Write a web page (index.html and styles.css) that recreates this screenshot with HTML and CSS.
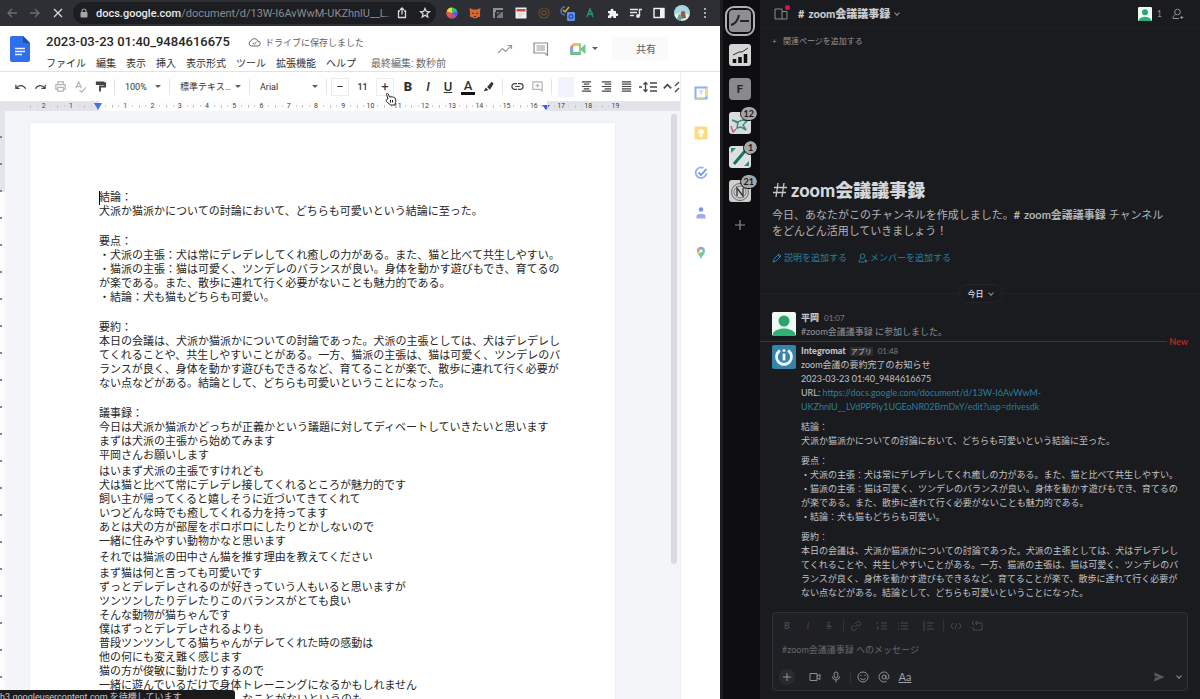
FILE: index.html
```html
<!DOCTYPE html>
<html lang="ja">
<head>
<meta charset="utf-8">
<title>2023-03-23 01:40_9484616675</title>
<link rel="stylesheet" href="styles.css">
</head>
<body>
<div class="desktop">
  <section class="browser">
    <header class="chrome">
      <button class="nav dim" aria-label="戻る"><svg viewBox="0 0 12 12"><path d="M11 6H2M6 2L2 6l4 4"/></svg></button>
      <button class="nav dim" aria-label="進む"><svg viewBox="0 0 12 12"><path d="M1 6h9M6 2l4 4-4 4"/></svg></button>
      <button class="nav" aria-label="中止"><svg viewBox="0 0 12 12"><path d="M2 2l8 8M10 2l-8 8"/></svg></button>
      <div class="address">
        <svg class="lock" viewBox="0 0 10 10"><rect x="1.500" y="4" width="7" height="5.500" rx="1" fill="#a5a6a9"/><path d="M3 4.500V3a2 2 0 0 1 4 0v1.500" fill="none" stroke="#a5a6a9" stroke-width="1.200"/></svg>
        <span class="url"><b>docs.google.com</b>/document/d/13W-I6AvWwM-UKZhnlU__L...</span>
        <button class="nav" aria-label="共有"><svg viewBox="0 0 12 12"><path d="M4 4H2.500v6.500h7V4H8M6 7.500V1M4 3l2-2 2 2"/></svg></button>
        <button class="nav" aria-label="ブックマーク"><svg viewBox="0 0 12 12"><path d="M6 1.500l1.300 3 3.200.2-2.500 2.100.8 3.200L6 8.300 3.200 10 4 6.800 1.500 4.700l3.200-.2z"/></svg></button>
      </div>
      <div class="extensions">
        <button aria-label="カラー"><svg viewBox="0 0 12 12"><circle cx="6" cy="6" r="5.500" fill="#3ac05c"/><path d="M6 6L6 .5A5.500 5.500 0 0 0 .7 4.500z" fill="#f6d13c"/><path d="M6 6L.7 4.500A5.500 5.500 0 0 0 4 11z" fill="#e9573f"/><path d="M6 6l-2 5a5.500 5.500 0 0 0 6-1.300z" fill="#e431a6"/><path d="M6 6l4 3.700A5.500 5.500 0 0 0 11.300 4.500z" fill="#4a5ff0"/></svg></button>
        <button aria-label="MetaMask"><svg viewBox="0 0 12 12"><path d="M.5 1L4 2.500h4L11.500 1l-.6 5 .3 3.500-2.700 1L7 11.300H5L3.500 10.500.8 9.500 1.100 6z" fill="#d9682c"/><path d="M3 6l2 .8M9 6l-2 .8M5 9.500h2" stroke="#532a18" stroke-width="1"/></svg></button>
        <button aria-label="メモ"><svg viewBox="0 0 12 12"><path d="M1 1h10v2H4v2H3v6H1z" fill="#8e9093"/><path d="M5 5h6v6H5z" fill="#77797c"/><path d="M3 10l7-6" stroke="#2e2f34" stroke-width="1.500"/></svg></button>
        <button aria-label="カレンダー"><svg viewBox="0 0 12 12"><rect x=".5" y=".5" width="11" height="11" fill="#f3eeee"/><path d="M1.500 2h9v2.500h-9z" fill="#cf4545"/><path d="M3 7h6M3 9h4" stroke="#d3c8c8"/></svg></button>
        <button aria-label="コイン"><svg viewBox="0 0 12 12"><circle cx="6" cy="6" r="5" fill="none" stroke="#6b4d28" stroke-width="1.200"/><circle cx="6" cy="6" r="2.200" fill="none" stroke="#80592b"/></svg></button>
        <button class="large" aria-label="チェック"><svg viewBox="0 0 16 16"><path d="M6 2a4 4 0 1 0 0 8" fill="none" stroke="#4e78c7" stroke-width="1.500"/><path d="M4 5l2 2 4-5" fill="none" stroke="#e3a83a" stroke-width="1.500"/><rect x="8" y="7" width="8" height="9" rx="1" fill="#5c8fe8"/><circle cx="12" cy="11.500" r="2" fill="none" stroke="#173b80"/></svg></button>
        <button aria-label="A"><svg viewBox="0 0 12 12"><path d="M3 10l3-8 3 8M4 7c2 1 3 0 5-1" fill="none" stroke="#2a9573" stroke-width="1.400"/></svg></button>
        <button aria-label="拡張機能"><svg viewBox="0 0 12 12"><path d="M1 4h2.500C2.800 1.500 6.500.5 6.500 3.500V4H9v2.500c3-.7 3 3 0 2.500V11H6.500c.2-2.500-2.500-2.500-2.300 0H1V8.500c2.300 0 2.300-2.500 0-2.200z" fill="#f2f2f3"/></svg></button>
        <button aria-label="再生リスト"><svg viewBox="0 0 12 12"><path d="M0 2.500h8M0 5.500h7M0 8.500h4M9.500 9V2.500H12" fill="none" stroke="#e4e4e6" stroke-width="1.400"/><circle cx="8" cy="9" r="2" fill="#e4e4e6"/></svg></button>
        <button aria-label="サイドパネル"><svg viewBox="0 0 12 12"><rect x="1" y="1.500" width="10" height="9" fill="none" stroke="#f2f2f3" stroke-width="1.400"/><path d="M7 1.500h4v9H7z" fill="#f2f2f3"/></svg></button>
        <button class="large" aria-label="プロフィール"><svg viewBox="0 0 16 16"><circle cx="8" cy="8" r="8" fill="#a7d7df"/><path d="M.5 10C4 7 12 8 15.500 10A8 8 0 0 1 .5 10z" fill="#e9efe9"/><path d="M6 14l1-7a2.500 2.500 0 0 1 4 0l1 6z" fill="#8b5f50"/><path d="M3 14l2-5 3 2-1 5z" fill="#67a58f"/></svg></button>
        <button aria-label="メニュー"><svg viewBox="0 0 12 12"><g fill="#d5d6d8"><circle cx="6" cy="2" r="1"/><circle cx="6" cy="6" r="1"/><circle cx="6" cy="10" r="1"/></g></svg></button>
      </div>
    </header>

    <div class="docs-head">
      <svg class="docs-logo" viewBox="0 0 20 26"><path d="M2 0h11l7 7v17a2 2 0 0 1-2 2H2a2 2 0 0 1-2-2V2a2 2 0 0 1 2-2z" fill="#2f6fea"/><path d="M13 0l7 7h-7z" fill="#1f4fb5"/><path d="M5 12.500h10M5 15.500h10M5 18.500h7" stroke="#e8f0ff" stroke-width="1.500"/></svg>
      <div class="docs-info">
        <div class="title-row">
          <h1>2023-03-23 01:40_9484616675</h1>
          <svg class="cloud" viewBox="0 0 13 10"><path d="M3.500 9a2.700 2.700 0 0 1-.3-5.300 3.500 3.500 0 0 1 6.600.5A2.400 2.400 0 0 1 10 9z" fill="none" stroke="#666"/><path d="M4.800 6l1.300 1.300L8.500 5" fill="none" stroke="#666"/></svg>
          <span class="saved">ドライブに保存しました</span>
        </div>
        <nav class="menus">
          <button>ファイル</button><button>編集</button><button>表示</button><button>挿入</button><button>表示形式</button><button>ツール</button><button>拡張機能</button><button>ヘルプ</button>
          <a href="#history">最終編集: 数秒前</a>
        </nav>
      </div>
      <div class="docs-actions">
        <button aria-label="アクティビティ"><svg width="16" height="12" viewBox="0 0 16 12"><path d="M1 10l4.500-4.500 3 3L14 3M10.500 2.500H14.500V6" fill="none" stroke="#999" stroke-width="1.200"/></svg></button>
        <button aria-label="コメント"><svg width="16" height="14" viewBox="0 0 16 14"><path d="M1 1h13.500v12.500L12 11H1z" fill="none" stroke="#8d8d8d" stroke-width="1.200"/><path d="M3.500 4h8.500M3.500 6h8.500M3.500 8h8.500" stroke="#999"/></svg></button>
        <button class="meet" aria-label="Meet"><svg width="18" height="14" viewBox="0 0 18 14"><path d="M4.500 1H12v3H4.500z" fill="#f0c14d"/><path d="M4.500 1v4H1z" fill="#e98172"/><path d="M1 5h3.500v5H1z" fill="#7ba6ee"/><path d="M1 10h11v3H2a1 1 0 0 1-1-1z" fill="#74bf86"/><path d="M12 1v12l-3-4V5z" fill="#8ace98"/><path d="M12 6l4.500-4v10L12 8.500z" fill="#7cc48e"/><path d="M4.500 4.500H10v5H4.500z" fill="#fff"/></svg><i class="caret"></i></button>
        <button class="share">共有</button>
      </div>
    </div>

    <div class="docs-body">
      <div class="editor">
        <div class="toolbar">
          <button aria-label="元に戻す"><svg viewBox="0 0 14 14"><path d="M2 5v4h4M2.500 8.500C5 5 10 5 12.500 9.500"/></svg></button>
          <button aria-label="やり直し"><svg viewBox="0 0 14 14"><path d="M12 5v4H8M11.500 8.500C9 5 4 5 1.500 9.500"/></svg></button>
          <button class="faint" aria-label="印刷"><svg viewBox="0 0 14 14"><path d="M4 5V2h6v3M4 10H2V5h10v5h-2M4 8h6v4H4z"/></svg></button>
          <button class="faint" aria-label="スペルチェック"><svg viewBox="0 0 14 14"><path d="M2 9l3-7 3 7M3 7h4M6 11l2 2 5-5"/></svg></button>
          <button aria-label="書式をコピー"><svg viewBox="0 0 14 14"><path d="M3 2.500h7v2H3zM10 3.500h2V7H6.500v5.500" stroke-width="2"/></svg></button>
          <span class="sep"></span>
          <label class="pick zoom"><select aria-label="倍率"><option>100%</option></select><i class="caret"></i></label>
          <span class="sep"></span>
          <label class="pick style"><select aria-label="スタイル"><option>標準テキス…</option></select><i class="caret"></i></label>
          <span class="sep"></span>
          <label class="pick font"><select aria-label="フォント"><option>Arial</option></select><i class="caret"></i></label>
          <span class="sep"></span>
          <button class="step" aria-label="小さく">−</button>
          <input class="size" aria-label="フォントサイズ" value="11">
          <button class="step plus" aria-label="大きく">+</button>
          <button class="glyph"><b>B</b></button>
          <button class="glyph"><em>I</em></button>
          <button class="glyph"><u>U</u></button>
          <button class="glyph"><span class="ink">A</span></button>
          <button aria-label="ハイライト"><svg viewBox="0 0 14 14"><path d="M2 12l2-4 3 3zM5.500 7.500l3 3 4-6.500-2-2z" fill="#333" stroke="none"/></svg></button>
          <span class="sep"></span>
          <button aria-label="リンク"><svg viewBox="0 0 14 14"><path d="M6.500 4H4a3 3 0 0 0 0 6h2.500M7.500 4H10a3 3 0 0 1 0 6H7.500M4.500 7h5"/></svg></button>
          <button class="faint" aria-label="コメントを追加"><svg viewBox="0 0 14 14"><path d="M2 2h10v10l-2-2H2zM7 4v4M5 6h4"/></svg></button>
          <span class="sep"></span>
          <button class="active" aria-label="左揃え"></button>
          <button aria-label="中央揃え"><svg viewBox="0 0 14 14"><path d="M2 2h10M4 4.500h6M2 7h10M4 9.500h6M2 12h10"/></svg></button>
          <button aria-label="右揃え"><svg viewBox="0 0 14 14"><path d="M2 2h10M5 4.500h7M2 7h10M5 9.500h7M2 12h10"/></svg></button>
          <button aria-label="両端揃え"><svg viewBox="0 0 14 14"><path d="M2 2h10M2 4.500h10M2 7h10M2 9.500h10M2 12h10"/></svg></button>
          <button class="spacing" aria-label="行間隔"><svg viewBox="0 0 20 14"><path d="M1 7h3M7.500 3v8M5.500 4.500l2-2 2 2M5.500 9.500l2 2 2-2M12 3h7M12 7h7M12 11h7"/></svg></button>
          <button class="fold" aria-label="非表示"><svg viewBox="0 0 14 14"><path d="M3 9l4-4 4 4" stroke-width="1.800"/></svg></button>
          <button class="more" aria-label="展開"><svg viewBox="0 0 6 14"><path d="M1 6l4-4M1 12l4-4"/></svg></button>
          <svg class="pointer" viewBox="0 0 12 14"><path d="M3 7L1.500 2.500c-.3-1.200 1.200-1.700 1.700-.6L4.500 5c2-.6 4 0 5.500 1 1 1 .8 3 .5 4.500L10 13H5.500L1.500 9.500C.5 8 2 7 3 7z" fill="#fff" stroke="#222"/><path d="M5.500 8v2.500M7.500 8v2.500" stroke="#222"/></svg>
        </div>
        <div class="ruler">
          <div class="marks">
            <span>2</span><span>1</span><span class="stop"></span><span>1</span><span>2</span><span>3</span><span>4</span><span>5</span><span>6</span><span>7</span><span>8</span><span>9</span><span>10</span><span>11</span><span>12</span><span>13</span><span>14</span><span>15</span><span class="edge">16</span><span>17</span><span>18</span><span>19</span>
          </div>
        </div>
        <div class="canvas">
          <div class="vruler"></div>
          <article class="page">
            <section>
              <p class="caret-line">結論：</p>
              <p>犬派か猫派かについての討論において、どちらも可愛いという結論に至った。</p>
            </section>
            <section>
              <p>要点：</p>
              <p>・犬派の主張：犬は常にデレデレしてくれ癒しの力がある。また、猫と比べて共生しやすい。</p>
              <p>・猫派の主張：猫は可愛く、ツンデレのバランスが良い。身体を動かす遊びもでき、育てるの<br>が楽である。また、散歩に連れて行く必要がないことも魅力的である。</p>
              <p>・結論：犬も猫もどちらも可愛い。</p>
            </section>
            <section>
              <p>要約：</p>
              <p>本日の会議は、犬派か猫派かについての討論であった。犬派の主張としては、犬はデレデレし<br>てくれることや、共生しやすいことがある。一方、猫派の主張は、猫は可愛く、ツンデレのバ<br>ランスが良く、身体を動かす遊びもできるなど、育てることが楽で、散歩に連れて行く必要が<br>ない点などがある。結論として、どちらも可愛いということになった。</p>
            </section>
            <section>
              <p>議事録：</p>
              <div class="turn">
                <p>今日は犬派か猫派かどっちが正義かという議題に対してディベートしていきたいと思います</p>
                <p>まずは犬派の主張から始めてみます</p>
                <p>平岡さんお願いします</p>
              </div>
              <div class="turn">
                <p>はいまず犬派の主張ですけれども</p>
                <p>犬は猫と比べて常にデレデレ接してくれるところが魅力的です</p>
                <p>飼い主が帰ってくると嬉しそうに近づいてきてくれて</p>
                <p>いつどんな時でも癒してくれる力を持ってます</p>
                <p>あとは犬の方が部屋をボロボロにしたりとかしないので</p>
                <p>一緒に住みやすい動物かなと思います</p>
              </div>
              <div class="turn">
                <p>それでは猫派の田中さん猫を推す理由を教えてください</p>
              </div>
              <div class="turn">
                <p>まず猫は何と言っても可愛いです</p>
                <p>ずっとデレデレされるのが好きっていう人もいると思いますが</p>
                <p>ツンツンしたりデレたりこのバランスがとても良い</p>
                <p>そんな動物が猫ちゃんです</p>
                <p>僕はずっとデレデレされるよりも</p>
                <p>普段ツンツンしてる猫ちゃんがデレてくれた時の感動は</p>
                <p>他の何にも変え難く感じます</p>
                <p>猫の方が俊敏に動けたりするので</p>
                <p>一緒に遊んでいるだけで身体トレーニングになるかもしれません</p>
                <p class="hanging">なことがないというのも</p>
              </div>
            </section>
          </article>
          <div class="scrollbar"></div>
        </div>
      </div>
      <aside class="side">
        <button aria-label="カレンダー"><svg viewBox="0 0 14 14"><path d="M1.500 1.500h11v11h-11z" fill="#fff" stroke="#90aef0" stroke-width="2"/><path d="M1 13h9M13 1v9" stroke="#b9d98d" stroke-width="2"/><path d="M13 2v8" stroke="#f1da83" stroke-width="2"/><path d="M5 5h4M7 5v4" stroke="#b4c8f2"/></svg></button>
        <button aria-label="Keep"><svg viewBox="0 0 14 14"><rect x=".5" y=".5" width="13" height="13" rx="1" fill="#fbdc80"/><circle cx="7" cy="6" r="2.700" fill="#fff"/><path d="M5.500 9h3v2h-3z" fill="#fff"/></svg></button>
        <button aria-label="ToDo"><svg viewBox="0 0 14 14"><path d="M9.500 2A5.300 5.300 0 1 0 12.300 7" fill="none" stroke="#8fb0f5" stroke-width="1.800"/><path d="M4.500 6.500L7 9l5.500-6" fill="none" stroke="#7191ec" stroke-width="1.800"/></svg></button>
        <button aria-label="連絡先"><svg viewBox="0 0 14 14"><circle cx="7" cy="3.500" r="2.300" fill="#8394e4"/><path d="M2.500 12.500V10c0-3 9-3 9 0v2.500z" fill="#9dabf2"/></svg></button>
        <button aria-label="マップ"><svg viewBox="0 0 14 14"><path d="M7 13.500C6.500 10 3 8.500 3 5a4 4 0 0 1 8 0c0 3.500-3.500 5-4 8.500z" fill="#7cc896"/><path d="M3.200 6A4 4 0 0 1 5 1.500L7 5z" fill="#e99090"/><path d="M5 1.500a4 4 0 0 1 5.300 1.200L7 5z" fill="#87a9f0"/><path d="M3.200 6L7 5l-3 4z" fill="#f3d67b"/><circle cx="7" cy="5" r="1.400" fill="#fff"/></svg></button>
      </aside>
    </div>
    <div class="status">h3.googleusercontent.com を待機しています...</div>
  </section>

  <section class="slack">
    <nav class="rail">
      <button class="ws current" aria-label="ノー"><svg viewBox="0 0 22 22"><rect width="22" height="22" rx="4" fill="#8f8f91"/><path d="M10 5C9 10 6 14 2 15M11 11h9" fill="none" stroke="#252528" stroke-width="2"/></svg></button>
      <button class="ws" aria-label="グラフ"><svg viewBox="0 0 22 22"><rect width="22" height="22" rx="3" fill="#d5d5d6"/><path d="M5.500 19v-4M11 19v-6M16.500 19v-9" stroke="#0d0d0f" stroke-width="3.500"/><path d="M4 11l6-3h3l6-4" fill="none" stroke="#333"/></svg></button>
      <button class="ws letter">F</button>
      <button class="ws" aria-label="ワークスペース 12"><svg viewBox="0 0 22 22"><rect width="22" height="22" rx="3" fill="#d9dcdc"/><path d="M3 8l6 2 4-2 5 1-4 4 3 5-5-3-4 1 1-5z" fill="none" stroke="#3b8f7d" stroke-width="1.500"/><path d="M2 14l2 6 3-3" fill="none" stroke="#c16780" stroke-width="1.500"/></svg><span class="badge">12</span></button>
      <button class="ws" aria-label="ワークスペース 1"><svg viewBox="0 0 22 22"><rect width="22" height="22" rx="3" fill="#dce0df"/><path d="M5 18L16 5" stroke="#17745e" stroke-width="3"/><path d="M2 7V2h5M15 20h5v-5" fill="#2b8c72"/></svg><span class="badge">1</span></button>
      <button class="ws" aria-label="ワークスペース 21"><svg viewBox="0 0 22 22"><rect width="22" height="22" rx="3" fill="#cfcfcf"/><circle cx="11" cy="12" r="8.500" fill="none" stroke="#666"/><circle cx="11" cy="12" r="6" fill="none" stroke="#777"/><path d="M8 16V8l6 8V8" fill="none" stroke="#333" stroke-width="1.300"/></svg><span class="badge">21</span></button>
      <button class="ws add" aria-label="追加"><svg viewBox="0 0 22 22"><path d="M11 6v10M6 11h10" stroke="#8b8c8f" stroke-width="1.200"/></svg></button>
    </nav>

    <main class="channel">
      <header class="channel-head">
        <button class="panel" aria-label="サイドバー"><svg viewBox="0 0 14 12"><path d="M1 1h7v10H1zM8 3.500h5V11H8" fill="none" stroke="#8b8c8f"/></svg><span class="dot"></span></button>
        <h2><button><span class="hash">#</span>zoom会議議事録<i class="chev"></i></button></h2>
        <button class="members"><svg class="face" viewBox="0 0 24 24"><rect width="24" height="24" rx="2" fill="#eefaf4"/><circle cx="12" cy="9" r="5" fill="#2ba36c"/><path d="M2 24v-3c3-6 17-6 20 0v3z" fill="#2fb075"/></svg>1</button>
        <button class="invite" aria-label="招待"><svg viewBox="0 0 12 12"><circle cx="5.500" cy="4" r="2.800"/><path d="M3.500 6.500C1.500 7.500 1 9 1 10.500h6M8 9.500h3.500M9.700 8v3"/></svg></button>
      </header>
      <button class="bookmark"><span>+</span>関連ページを追加する</button>
      <div class="feed">
        <div class="intro">
          <h3><svg viewBox="0 0 16 16"><path d="M6 1L4 15M12 1l-2 14M2 5.500h13M1 10.500h13"/></svg>zoom会議議事録</h3>
          <p>今日、あなたがこのチャンネルを作成しました。<b><span class="hash">#</span>zoom会議議事録</b> チャンネル<br>をどんどん活用していきましょう！</p>
          <div class="links">
            <a href="#describe"><svg viewBox="0 0 10 10"><path d="M1 9l1-3 5-5 2 2-5 5zM6 2l2 2"/></svg>説明を追加する</a>
            <a href="#invite"><svg viewBox="0 0 10 10"><circle cx="4.500" cy="3.200" r="2.300"/><path d="M3 5.500C1 6.500 1 8 1 9h5M6 8h3.500M7.800 6.200v3.500"/></svg>メンバーを追加する</a>
          </div>
        </div>
        <div class="day"><button>今日<i class="chev"></i></button></div>
        <article class="message">
          <svg class="avatar" viewBox="0 0 24 24"><rect width="24" height="24" rx="2" fill="#f0faf5"/><circle cx="12" cy="9" r="5.500" fill="#2ba36c"/><path d="M1 24v-3c4-6 18-6 22 0v3z" fill="#2fb075"/></svg>
          <div class="content">
            <div class="who"><b>平岡</b><time>01:07</time></div>
            <p class="soft">#zoom会議議事録 に参加しました。</p>
          </div>
        </article>
        <div class="unread"><span>New</span></div>
        <article class="message">
          <svg class="avatar" viewBox="0 0 24 24"><rect width="24" height="24" rx="2" fill="#3582ab"/><path d="M8 5.500a7.500 7.500 0 1 0 8 0" fill="none" stroke="#f2f7fa" stroke-width="2.800"/><path d="M12 8.500v7" stroke="#f2f7fa" stroke-width="2.800"/><circle cx="12" cy="5.500" r="1.500" fill="#f2f7fa"/></svg>
          <div class="content">
            <div class="who"><b>Integromat</b><span class="app">アプリ</span><time>01:48</time></div>
            <p>zoom会議の要約完了のお知らせ<br>2023-03-23 01:40_9484616675<br>URL: <a href="#doc">https://docs.google.com/document/d/13W-I6AvWwM-<br>UKZhnlU__LVdPPPiy1UGEoNR02BrnDxY/edit?usp=drivesdk</a></p>
            <p>結論：<br>犬派か猫派かについての討論において、どちらも可愛いという結論に至った。</p>
            <p>要点：<br>・犬派の主張：犬は常にデレデレしてくれ癒しの力がある。また、猫と比べて共生しやすい。<br>・猫派の主張：猫は可愛く、ツンデレのバランスが良い。身体を動かす遊びもでき、育てるの<br>が楽である。また、散歩に連れて行く必要がないことも魅力的である。<br>・結論：犬も猫もどちらも可愛い。</p>
            <p>要約：<br>本日の会議は、犬派か猫派かについての討論であった。犬派の主張としては、犬はデレデレし<br>てくれることや、共生しやすいことがある。一方、猫派の主張は、猫は可愛く、ツンデレのバ<br>ランスが良く、身体を動かす遊びもできるなど、育てることが楽で、散歩に連れて行く必要が<br>ない点などがある。結論として、どちらも可愛いということになった。</p>
          </div>
        </article>
      </div>
      <form class="composer">
        <div class="format">
          <button type="button"><b>B</b></button><button type="button"><em>I</em></button><button type="button"><s>S</s></button>
          <span class="bar"></span>
          <button type="button" aria-label="リンク"><svg viewBox="0 0 12 12"><path d="M5 7l3-3M4 5L2 7a2 2 0 0 0 3 3l2-2M5 4l2-2a2 2 0 0 1 3 3L8 7"/></svg></button>
          <button type="button" class="wide" aria-label="番号付き"><svg viewBox="0 0 12 12"><path d="M1 2v2M1 7h1v2H1M5 3h6M5 6h6M5 9h6"/></svg></button>
          <button type="button" aria-label="箇条書き"><svg viewBox="0 0 12 12"><path d="M1 3h1M1 6h1M1 9h1M4 3h7M4 6h7M4 9h7"/></svg></button>
          <button type="button" class="wide" aria-label="引用"><svg viewBox="0 0 12 12"><path d="M1 1v10M4 3h7M4 6h5M4 9h7"/></svg></button>
          <span class="bar"></span>
          <button type="button" aria-label="コード"><svg viewBox="0 0 12 12"><path d="M3 3L1 6l2 3M9 3l2 3-2 3M7 3L5 9"/></svg></button>
          <button type="button" aria-label="コードブロック"><svg viewBox="0 0 12 12"><path d="M4 3h7v7H2V7M3 1L1 3l2 2M5 1l2 2-2 2"/></svg></button>
        </div>
        <textarea rows="1" aria-label="メッセージ" placeholder="#zoom会議議事録 へのメッセージ"></textarea>
        <div class="tools">
          <button type="button" class="round" aria-label="添付"><svg viewBox="0 0 12 12"><path d="M6 2v8M2 6h8"/></svg></button>
          <button type="button" class="after" aria-label="ビデオ"><svg viewBox="0 0 12 12"><path d="M1 2.500h7v7H1zM8 5l3-1.500v5L8 7"/></svg></button>
          <button type="button" aria-label="音声"><svg viewBox="0 0 12 12"><rect x="4.200" y="1" width="3.600" height="6" rx="1.800"/><path d="M2.500 5.500c0 4.500 7 4.500 7 0M6 9v2.500"/></svg></button>
          <span class="bar"></span>
          <button type="button" aria-label="絵文字"><svg viewBox="0 0 12 12"><circle cx="6" cy="6" r="5"/><path d="M4 4v1M8 4v1M3.500 7c1 2.300 4 2.300 5 0"/></svg></button>
          <button type="button" aria-label="メンション"><svg viewBox="0 0 12 12"><circle cx="6" cy="6" r="2"/><path d="M8 4v3c0 1.800 3 1.500 3-1a5 5 0 1 0-2.500 4.300"/></svg></button>
          <button type="button" class="aa"><u>Aa</u></button>
          <button type="submit" class="send" aria-label="送信"><svg viewBox="0 0 12 12"><path d="M1 1.500L11.500 6 1 10.500 2 6.800 7 6 2 5.200z" fill="#5b5d61" stroke="none"/></svg></button>
          <i class="chev"></i>
        </div>
      </form>
    </main>
  </section>
</div>
</body>
</html>
```
FILE: styles.css
```css
* { box-sizing: border-box; }
body, h1, h2, h3, p { margin: 0; }
body { font-family: Roboto, "Noto Sans CJK JP", sans-serif; background: #17171a; }
button, input, select, textarea { font: inherit; color: inherit; background: none; border: 0; padding: 0; margin: 0; }
button { display: flex; align-items: center; justify-content: center; white-space: nowrap; }
svg { display: block; flex: none; }
.desktop { display: grid; grid-template-columns: 3fr 2fr; height: 100vh; overflow: hidden; }

/* Browser window */
.browser { display: flex; flex-direction: column; min-width: 0; min-height: 0; position: relative; background: #fff; }
.chrome { display: flex; align-items: center; flex: none; height: 26px; background: #2e2f34; }
.nav { width: 23px; height: 22px; }
.nav svg { width: 12px; height: 12px; fill: none; stroke: #d8d9dc; stroke-width: 1.3; }
.nav.dim svg { stroke: #6e6f74; }
.address { display: flex; align-items: center; flex: 1; min-width: 0; height: 22px; margin-left: 4px; padding-left: 6px; border-radius: 11px; background: #1d1e21; }
.lock { width: 10px; height: 10px; margin-right: 7px; }
.url { flex: 1; min-width: 0; overflow: hidden; white-space: nowrap; font-size: 11px; color: #8b8c90; }
.url b { font-weight: 500; color: #e9e9eb; }
.extensions { display: flex; align-items: center; margin: 0 4px; }
.extensions button { width: 23px; height: 22px; }
.extensions svg { width: 12px; height: 12px; }
.extensions .large svg { width: 16px; height: 16px; }

.docs-head { display: flex; flex: none; height: 46px; padding-left: 10px; border-bottom: 1px solid #e2e2e4; }
.docs-logo { width: 20px; height: 26px; margin-top: 10px; }
.docs-info { flex: 1; min-width: 0; margin-left: 16px; padding-top: 7px; }
.title-row { display: flex; align-items: center; height: 18px; }
h1 { font-size: 13px; font-weight: 500; line-height: 18px; color: #262626; white-space: nowrap; }
.cloud { width: 13px; height: 10px; margin: 0 4px 0 18px; }
.saved { font-size: 9px; color: #5f6063; white-space: nowrap; }
.menus { display: flex; align-items: center; gap: 10px; height: 22px; font-size: 10px; color: #2f2f31; }
.menus a { margin-left: 5px; color: #6a6a6d; text-decoration: none; white-space: nowrap; }
.docs-actions { display: flex; align-items: center; gap: 20px; padding-right: 52px; }
.docs-actions .share { width: 56px; height: 24px; margin-left: -6px; padding-left: 12px; border-radius: 3px; background: #fafafa; font-size: 10px; color: #5c5c5e; }
.meet { gap: 5px; }
.caret { border: 3px solid transparent; border-top-color: #5f6063; border-bottom: 0; }

.docs-body { display: flex; flex: 1; min-height: 0; }
.editor { display: flex; flex-direction: column; flex: 1; min-width: 0; }
.toolbar { position: relative; display: flex; align-items: center; flex: none; height: 29px; padding-left: 10px; font-size: 9px; color: #333; }
.toolbar button { flex: none; width: 20px; height: 20px; }
.toolbar button svg { width: 13px; height: 13px; fill: none; stroke: #454547; stroke-width: 1.3; }
.toolbar .faint svg { stroke: #b4b4b6; }
.sep { flex: none; width: 1px; height: 16px; margin: 0 4px; background: #e5e5e7; }
.pick { display: flex; align-items: center; flex: none; padding: 0 4px 0 6px; }
.pick select { flex: 1; min-width: 0; appearance: none; outline: 0; }
.zoom { width: 46px; }
.style { width: 71px; }
.font { width: 68px; }
.toolbar .step { width: 18px; height: 18px; border: 1px solid #ececee; font-size: 13px; }
.size { width: 27px; height: 18px; text-align: center; font-weight: 500; }
.toolbar .plus { margin-right: 4px; }
.toolbar .glyph { font-size: 13px; font-weight: 500; }
.toolbar .glyph b { font-weight: 900; }
.ink { padding: 0 3px; line-height: 13px; border-bottom: 3px solid #111; }
.toolbar .active { width: 16px; margin: 0 2px; background: #f2f2fd; }
.toolbar .spacing { width: 24px; }
.toolbar .spacing svg { width: 20px; height: 14px; }
.toolbar .fold { width: 14px; }
.toolbar .more { width: 6px; }
.toolbar .more svg { width: 6px; height: 14px; }
.pointer { position: absolute; left: 385px; bottom: -5px; width: 12px; height: 14px; z-index: 2; }

.ruler { flex: none; height: 10px; padding: 0 51px 0 30px; background: linear-gradient(90deg, #e3e4e9 14.5%, #fdfdfe 14.5% 80.5%, #e3e4e9 80.5%); }
.marks { display: flex; }
.marks span { position: relative; flex: 1; height: 10px; font-size: 7px; line-height: 10px; text-align: center; color: #3e3f42; background: linear-gradient(#c3c4c9, #c3c4c9) 0 50% / 1px 3px no-repeat, linear-gradient(#cfd0d4, #cfd0d4) 25% 50% / 1px 2px no-repeat, linear-gradient(#cfd0d4, #cfd0d4) 78% 50% / 1px 2px no-repeat; }
.stop::after, .edge::after { content: ""; position: absolute; top: 2px; left: 50%; margin-left: -4px; border: 4px solid transparent; border-top: 7px solid #3f74ee; border-bottom: 0; }
.edge::after { top: 4px; left: 95%; border-top: 5px solid #4a55e0; }

.canvas { display: flex; flex: 1; min-height: 0; overflow: hidden; background: #f4f5f9; }
.vruler { flex: none; width: 5px; background: repeating-linear-gradient(transparent 0 25px, #85868a 25px 27px) 0 0 / 2px 100% no-repeat, linear-gradient(#e3e4e9 81px, #fcfcfd 81px); }
.page { flex: 1; min-width: 0; height: max-content; margin: 12px 56px 0 25px; padding: 68px 40px 0 69px; background: #fff; box-shadow: 0 0 2px #e2e3e8; font-size: 11px; line-height: 14px; color: #262626; white-space: nowrap; }
.page section + section { margin-top: 16px; }
.turn + .turn { margin-top: 2px; }
.caret-line::before { content: ""; position: absolute; width: 1px; height: 14px; background: #000; }
.hanging { padding-left: 13em; }
.scrollbar { flex: none; width: 6px; height: 450px; margin: 3px 3px 0 0; border-radius: 3px; background: #d9dade; }
.side { display: flex; flex-direction: column; align-items: center; gap: 20px; flex: none; width: 40px; padding-top: 11px; border-left: 1px solid #ededf0; }
.side button { width: 20px; height: 20px; }
.side svg { width: 14px; height: 14px; }
.status { position: absolute; left: 0; bottom: 0; width: 235px; height: 9px; overflow: hidden; border-radius: 0 3px 0 0; background: #1b1b1e; font-size: 9px; line-height: 14px; color: #c8c8ca; white-space: nowrap; }

/* Slack window */
.slack { display: flex; min-width: 0; min-height: 0; border-left: 3px solid #1c1c1e; background: #1a1b1f; font-family: Lato, "Noto Sans CJK JP", sans-serif; font-size: 9px; line-height: 14px; color: #c2c3c5; }
.rail { display: flex; flex-direction: column; align-items: center; gap: 12px; flex: none; width: 37px; padding-top: 10px; padding-right: 3px; background: #0e0e10; }
.ws { position: relative; width: 22px; height: 22px; border-radius: 4px; }
.ws svg { width: 22px; height: 22px; }
.current { outline: 2px solid #b0b0b2; outline-offset: 2px; border-radius: 5px; }
.letter { background: #8a8a8c; color: #252528; font-size: 12px; font-weight: 700; }
.badge { position: absolute; top: -5px; right: -6px; min-width: 13px; height: 13px; padding: 0 3px; border-radius: 7px; background: #a6a6a9; outline: 1px solid #0e0e10; color: #1b1b1e; font-size: 9px; font-weight: 700; line-height: 13px; }
.channel { display: flex; flex-direction: column; flex: 1; min-width: 0; }
.channel-head { display: flex; align-items: center; flex: none; height: 29px; padding: 0 14px; border-bottom: 1px solid #202125; }
.panel { position: relative; }
.panel svg { width: 14px; height: 12px; }
.dot { position: absolute; top: -3px; right: -2px; width: 5px; height: 5px; border-radius: 50%; background: #d8134f; }
h2 { flex: 1; margin-left: 10px; font-size: 11px; font-weight: 900; color: #cacbcd; }
.hash { margin-right: 4px; }
.chev { width: 4px; height: 4px; margin: 0 0 2px 5px; border: solid #939497; border-width: 0 1px 1px 0; rotate: 45deg; }
.members { gap: 5px; color: #8f9093; }
.face { width: 14px; height: 14px; }
.invite { margin: 0 2px 0 10px; }
.invite svg { width: 12px; height: 12px; fill: none; stroke: #909194; }
.bookmark { align-self: flex-start; height: 24px; margin-left: 12px; font-size: 8px; color: #939497; }
.bookmark span { width: 11px; text-align: left; }
.feed { display: flex; flex-direction: column; justify-content: flex-end; flex: 1; min-height: 0; padding-bottom: 12px; }
.intro { padding: 0 12px; }
h3 { display: flex; align-items: center; gap: 3px; font-size: 18px; line-height: 26px; font-weight: 900; color: #d6d7d9; }
h3 svg { width: 16px; height: 16px; fill: none; stroke: #c6c7c9; stroke-width: 1.3; }
.intro p { margin-top: 4px; font-size: 11px; line-height: 16px; color: #b3b4b7; white-space: nowrap; }
.links { display: flex; gap: 11px; margin-top: 12px; }
.links a { display: flex; align-items: center; gap: 2px; }
.links svg { width: 10px; height: 10px; fill: none; stroke: #2a7f9e; }
a { color: #2a7f9e; text-decoration: none; }
.day { display: flex; align-items: center; margin-top: 19px; }
.day::before, .day::after { content: ""; flex: 1; height: 1px; background: #222327; }
.day button { height: 19px; padding: 0 9px; border: 1px solid #24252a; border-radius: 10px; font-weight: 700; font-size: 8px; }
.message { display: flex; gap: 5px; padding: 0 12px; }
.day + .message { margin-top: 8px; }
.avatar { width: 24px; height: 24px; margin-top: 1px; }
.content { min-width: 0; white-space: nowrap; }
.content p + p { margin-top: 6px; }
.who { display: flex; align-items: center; height: 14px; }
.who b { font-weight: 900; }
.who time { margin-left: 5px; color: #7c7d81; font-size: 8px; }
.app { margin-left: 4px; padding: 0 1px; background: #2b2c30; font-size: 7px; line-height: 9px; }
.soft { color: #939497; }
.unread { display: flex; align-items: center; height: 5px; padding-right: 12px; color: #a52d2b; font-weight: 700; }
.unread::before { content: ""; flex: 1; height: 1px; margin-right: 2px; background: #73201f; }
.composer { flex: none; margin: 0 12px 8px; padding: 4px 6px; border: 1px solid #303236; border-radius: 4px; background: #1f2023; }
.format, .tools { display: flex; align-items: center; height: 18px; color: #46484c; }
.composer button { width: 16px; height: 16px; margin-right: 5px; }
.composer svg { width: 12px; height: 12px; fill: none; stroke: #46484c; }
.composer .wide { margin-left: 5px; }
.bar { width: 1px; height: 12px; margin: 0 4px 0 1px; background: #303236; }
textarea { display: block; width: 100%; height: 18px; margin: 6px 0 9px; padding: 2px 3px; resize: none; overflow: hidden; }
textarea::placeholder { color: #66686c; opacity: 1; }
.composer .tools svg { stroke: #8f9094; }
.composer .round { border-radius: 50%; background: #2a2b2f; }
.composer .after { margin-left: 7px; }
.tools .aa { font-size: 11px; color: #a0a1a4; }
.composer .send { margin-left: auto; }
```
